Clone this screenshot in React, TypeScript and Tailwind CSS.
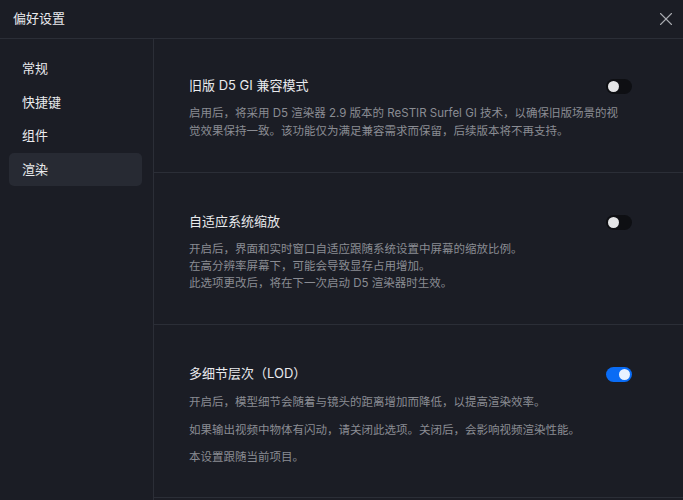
import { X } from 'lucide-react';

const navItems = ['常规', '快捷键', '组件', '渲染'];

function Toggle({ on }: { on: boolean }) {
  return (
    <div
      className={`flex h-[15px] w-[26px] shrink-0 items-center rounded-full px-[2px] ${
        on ? 'justify-end bg-[#0a6cf5]' : 'justify-start bg-[#0e0f13]'
      }`}
    >
      <div className={`h-[11px] w-[11px] rounded-full ${on ? 'bg-[#e8f1ff]' : 'bg-[#e4e4e6]'}`} />
    </div>
  );
}

export default function App() {
  return (
    <div
      className="flex h-[500px] w-[683px] flex-col overflow-hidden bg-[#1b1d25] text-[#e9eaed]"
      style={{ fontFamily: 'Inter, "Noto Sans CJK SC", sans-serif' }}
    >
      {/* Header */}
      <div className="flex h-[39px] shrink-0 items-center justify-between border-b border-[#2b2e37] pl-[13px] pr-[6px]">
        <span className="text-[13px]">偏好设置</span>
        <X className="h-[22px] w-[22px] text-[#a9abb1]" strokeWidth={1.2} />
      </div>

      <div className="flex min-h-0 flex-1">
        {/* Sidebar */}
        <div className="flex w-[154px] shrink-0 flex-col border-r border-[#2b2e37] pl-[9px] pr-[11px] pt-[13px]">
          {navItems.map((item) => (
            <div
              key={item}
              className={`flex h-[33.5px] items-center rounded-[5px] pl-[13px] text-[13px] ${
                item === '渲染' ? 'bg-[#272a33]' : ''
              }`}
            >
              {item}
            </div>
          ))}
        </div>

        {/* Content */}
        <div className="flex min-w-0 flex-1 flex-col">
          <section className="h-[134px] border-b border-[#2b2e37] pl-[35px] pr-[51px] pt-[37px]">
            <div className="flex h-[20px] items-center justify-between">
              <span className="text-[13px]">旧版 D5 GI 兼容模式</span>
              <Toggle on={false} />
            </div>
            <p className="mt-[8px] w-[430px] text-[11.5px] leading-[18px] text-[#8a8c93]">
              启用后，将采用 D5 渲染器 2.9 版本的 ReSTIR Surfel GI 技术，以确保旧版场景的视觉效果保持一致。该功能仅为满足兼容需求而保留，后续版本将不再支持。
            </p>
          </section>

          <section className="h-[152px] border-b border-[#2b2e37] pl-[35px] pr-[51px] pt-[39px]">
            <div className="flex h-[20px] items-center justify-between">
              <span className="text-[13px]">自适应系统缩放</span>
              <Toggle on={false} />
            </div>
            <div className="mt-[9px] text-[11.5px] leading-[17px] text-[#8a8c93]">
              <p>开启后，界面和实时窗口自适应跟随系统设置中屏幕的缩放比例。</p>
              <p>在高分辨率屏幕下，可能会导致显存占用增加。</p>
              <p>此选项更改后，将在下一次启动 D5 渲染器时生效。</p>
            </div>
          </section>

          <section className="h-[173px] border-b border-[#2b2e37] pl-[35px] pr-[51px] pt-[39px]">
            <div className="flex h-[20px] items-center justify-between">
              <span className="text-[13px]">多细节层次（LOD）</span>
              <Toggle on={true} />
            </div>
            <div className="mt-[10px] flex flex-col gap-[10px] text-[11.5px] leading-[17.5px] text-[#8a8c93]">
              <p>开启后，模型细节会随着与镜头的距离增加而降低，以提高渲染效率。</p>
              <p>如果输出视频中物体有闪动，请关闭此选项。关闭后，会影响视频渲染性能。</p>
              <p>本设置跟随当前项目。</p>
            </div>
          </section>
        </div>
      </div>
    </div>
  );
}
